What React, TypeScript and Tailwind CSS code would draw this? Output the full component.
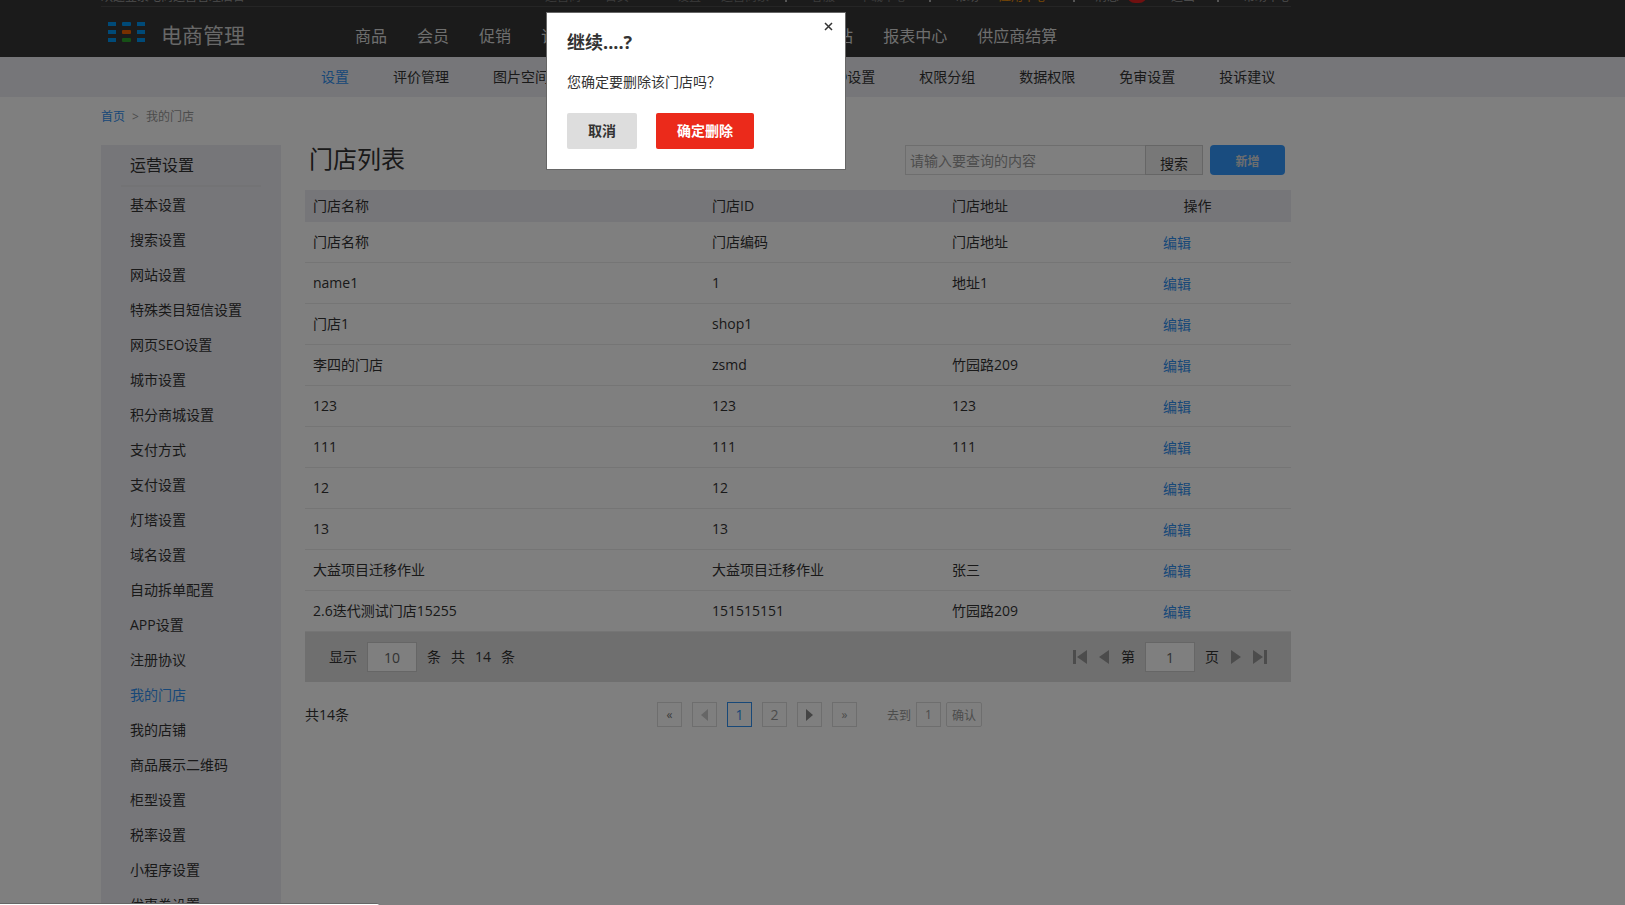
import React, { useState } from "react";

interface Shop {
  name: string;
  code: string;
  address: string;
}

const mainNav = ["商品", "会员", "促销", "订单", "财务", "库存", "数据统计", "网站", "报表中心", "供应商结算"];

const subNav = ["设置", "评价管理", "图片空间", "二维码管理", "会员组设置", "SEO设置", "权限分组", "数据权限", "免审设置", "投诉建议"];

const sideMenu = [
  "基本设置",
  "搜索设置",
  "网站设置",
  "特殊类目短信设置",
  "网页SEO设置",
  "城市设置",
  "积分商城设置",
  "支付方式",
  "支付设置",
  "灯塔设置",
  "域名设置",
  "自动拆单配置",
  "APP设置",
  "注册协议",
  "我的门店",
  "我的店铺",
  "商品展示二维码",
  "柜型设置",
  "税率设置",
  "小程序设置",
  "优惠券设置",
];

const shops: Shop[] = [
  { name: "门店名称", code: "门店编码", address: "门店地址" },
  { name: "name1", code: "1", address: "地址1" },
  { name: "门店1", code: "shop1", address: "" },
  { name: "李四的门店", code: "zsmd", address: "竹园路209" },
  { name: "123", code: "123", address: "123" },
  { name: "111", code: "111", address: "111" },
  { name: "12", code: "12", address: "" },
  { name: "13", code: "13", address: "" },
  { name: "大益项目迁移作业", code: "大益项目迁移作业", address: "张三" },
  { name: "2.6迭代测试门店15255", code: "151515151", address: "竹园路209" },
];

function Logo() {
  return (
    <svg width="38" height="20" viewBox="0 0 38 20" aria-hidden="true">
      <g fill="#0094f0">
        <rect x="0" y="0" width="8" height="4" />
        <rect x="14" y="0" width="9" height="4" rx="1" />
        <rect x="29" y="0" width="8" height="4" />
        <rect x="0" y="8" width="8" height="4" />
        <rect x="29" y="8" width="8" height="4" />
        <rect x="0" y="16" width="8" height="4" />
        <rect x="29" y="16" width="8" height="4" />
      </g>
      <rect x="14" y="8" width="9" height="4" rx="1" fill="#f06000" />
      <rect x="14" y="16" width="9" height="4" rx="1" fill="#2ca02c" />
    </svg>
  );
}

function Arrow({ left, bar }: { left?: boolean; bar?: boolean }) {
  return (
    <svg
      width={bar ? 14 : 10}
      height="14"
      viewBox={bar ? "0 0 14 14" : "0 0 10 14"}
      fill="currentColor"
      className={left ? "rotate-180" : ""}
      aria-hidden="true"
    >
      <path d="M0 0L10 7L0 14Z" />
      {bar && <rect x="11" y="0" width="3" height="14" />}
    </svg>
  );
}

function SmallArrow({ left }: { left?: boolean }) {
  return (
    <svg width="7" height="12" viewBox="0 0 7 12" fill="currentColor" className={left ? "rotate-180" : ""} aria-hidden="true">
      <path d="M0 0L7 6L0 12Z" />
    </svg>
  );
}

function Header() {
  return (
    <header className="bg-[#363636]">
      <div className="ml-[101px] max-w-[1190px]">
        <div className="flex h-[7px] items-end justify-between overflow-hidden border-b border-[#4a4a4a] pb-px text-xs leading-4 text-[#999]">
          <span>欢迎登录电商运营管理后台</span>
          <div className="flex shrink-0 items-end">
            <div className="flex gap-6 pr-12 text-[#777]">
              <span>运营商</span>
              <span>首页</span>
            </div>
            <div className="flex w-[108px] gap-5 text-[#777]">
              <span>设置</span>
              <span>运营商家</span>
            </div>
            <span className="mb-[3px] h-4 w-0.5 bg-[#aaa]" />
            <div className="flex w-[142px] gap-6 pl-6 text-[#777]">
              <span>客服</span>
              <span>下载中心</span>
            </div>
            <span className="mb-[3px] h-4 w-0.5 bg-[#aaa]" />
            <div className="flex w-[142px] gap-5 pl-6">
              <span>帮助</span>
              <span className="text-[#f0900a]">应用中心</span>
            </div>
            <span className="mb-[3px] h-4 w-0.5 bg-[#aaa]" />
            <div className="flex w-[142px] items-end pl-5">
              <span>消息</span>
              <span className="mb-0.5 ml-2 h-4 w-5 rounded-full bg-[#e02020]" />
              <span className="ml-6">退出</span>
            </div>
            <span className="mb-[3px] h-4 w-0.5 bg-[#aaa]" />
            <span className="pl-6">帮助中心</span>
          </div>
        </div>
        <div className="flex h-[50px] items-center">
          <a href="#" className="flex w-[254px] items-center gap-[15px] pl-[7px]">
            <Logo />
            <span className="pt-[6px] text-[21px] leading-7 text-[#d0d0d0]">电商管理</span>
          </a>
          <nav className="flex gap-[30px] pt-2 text-base whitespace-nowrap text-[#ddd]">
            {mainNav.map((item) => (
              <a key={item} href="#">
                {item}
              </a>
            ))}
          </nav>
        </div>
      </div>
    </header>
  );
}

function Sidebar() {
  return (
    <aside className="w-[180px] shrink-0 bg-[#ededf2]">
      <h2 className="mx-5 border-b-2 border-[#e6e6ea] pl-[9px] text-base leading-10">运营设置</h2>
      <ul className="pt-px">
        {sideMenu.map((item) => (
          <li key={item} className="h-[35px] pl-[29px] leading-[34px]">
            <a href="#" className={item === "我的门店" ? "text-[#3090f0]" : ""}>
              {item}
            </a>
          </li>
        ))}
      </ul>
    </aside>
  );
}

function ShopTable() {
  return (
    <table className="w-full table-fixed border-separate border-spacing-0 text-left">
      <colgroup>
        <col className="w-[399px]" />
        <col className="w-[240px]" />
        <col className="w-[160px]" />
        <col className="w-[187px]" />
      </colgroup>
      <thead className="bg-[#ededf2]">
        <tr className="h-8">
          <th className="px-2 font-normal">门店名称</th>
          <th className="px-2 font-normal">门店ID</th>
          <th className="px-2 font-normal">门店地址</th>
          <th className="text-center font-normal">操作</th>
        </tr>
      </thead>
      <tbody>
        {shops.map((shop, index) => (
          <tr key={index} className="h-[41px]">
            <td className="border-b border-[#eaeaea] px-2">{shop.name}</td>
            <td className="border-b border-[#eaeaea] px-2">{shop.code}</td>
            <td className="border-b border-[#eaeaea] px-2">{shop.address}</td>
            <td className="border-b border-[#eaeaea] pt-0.5 pl-[59px]">
              <a href="#" className="text-[#3090f0]">
                编辑
              </a>
            </td>
          </tr>
        ))}
      </tbody>
    </table>
  );
}

function TableFooter() {
  return (
    <div className="flex h-[50px] items-center justify-between bg-[#dfdfdf] px-6">
      <div className="flex items-center gap-[10px]">
        <label htmlFor="page-size">显示</label>
        <input id="page-size" defaultValue="10" className="h-[30px] w-[50px] border border-[#ccc] bg-white text-center text-[#666]" />
        <span>条</span>
        <span>共</span>
        <span>14</span>
        <span>条</span>
      </div>
      <div className="flex items-center gap-3 text-[#999]">
        <button type="button" aria-label="首页">
          <Arrow left bar />
        </button>
        <button type="button" aria-label="上一页">
          <Arrow left />
        </button>
        <div className="flex items-center gap-[10px] text-[#333]">
          <label htmlFor="page-no">第</label>
          <input id="page-no" defaultValue="1" className="h-[30px] w-[50px] border border-[#ccc] bg-white text-center text-[#666]" />
          <span>页</span>
        </div>
        <button type="button" aria-label="下一页">
          <Arrow />
        </button>
        <button type="button" aria-label="末页">
          <Arrow bar />
        </button>
      </div>
    </div>
  );
}

function Pagination() {
  const box = "flex h-[25px] w-[25px] items-center justify-center border border-[#ddd]";
  return (
    <div className="flex items-center pt-5">
      <span className="w-[352px]">共14条</span>
      <div className="flex gap-[10px] text-[#999]">
        <button type="button" aria-label="首页" className={box + " text-xs text-[#777]"}>
          «
        </button>
        <button type="button" aria-label="上一页" className={box + " text-[#ccc]"}>
          <SmallArrow left />
        </button>
        <button type="button" className="flex h-[25px] w-[25px] items-center justify-center border border-[#3090f0] text-[#3090f0]">
          1
        </button>
        <button type="button" className={box}>
          2
        </button>
        <button type="button" aria-label="下一页" className={box + " text-[#888]"}>
          <SmallArrow />
        </button>
        <button type="button" aria-label="末页" className={box + " text-xs"}>
          »
        </button>
      </div>
      <div className="flex items-center gap-[5px] pl-[30px] text-xs text-[#999]">
        <label htmlFor="goto" className="pt-0.5">
          去到
        </label>
        <input id="goto" defaultValue="1" className="h-[25px] w-[25px] border border-[#ddd] text-center" />
        <button type="button" className="h-[25px] w-9 rounded-xs border border-[#ddd] pt-0.5">
          确认
        </button>
      </div>
    </div>
  );
}

function ConfirmDialog({ onClose }: { onClose: () => void }) {
  return (
    <div className="fixed inset-0 z-10 flex items-start bg-black/50 pt-3 pl-[546px]">
      <div role="dialog" aria-labelledby="dialog-title" className="relative w-[300px] border border-[#666] bg-white px-5 pt-[13px] pb-5">
        <button type="button" aria-label="关闭" onClick={onClose} className="absolute top-[9px] right-[12px]">
          <svg width="9" height="9" viewBox="0 0 9 9" stroke="#333" strokeWidth="1.5" aria-hidden="true">
            <path d="M1 1L8 8M8 1L1 8" />
          </svg>
        </button>
        <h3 id="dialog-title" className="text-lg leading-8 font-bold">
          继续....?
        </h3>
        <p className="pt-3 pb-[19px] leading-6">您确定要删除该门店吗？</p>
        <div className="flex gap-[19px] font-bold">
          <button type="button" onClick={onClose} className="h-9 rounded-xs bg-[#ddd] px-[21px]">
            取消
          </button>
          <button type="button" onClick={onClose} className="h-9 rounded-xs bg-[#eb2a1b] px-[21px] text-white">
            确定删除
          </button>
        </div>
      </div>
    </div>
  );
}

export default function App() {
  const [showConfirm, setShowConfirm] = useState(true);

  return (
    <div className="h-screen overflow-hidden bg-white font-['Open_Sans','Noto_Sans_CJK_SC',sans-serif] text-sm text-[#333]">
      <Header />
      <nav className="h-10 bg-[#ededf2]">
        <div className="ml-[321px] flex gap-11 leading-10 whitespace-nowrap">
          {subNav.map((item, index) => (
            <a key={item} href="#" className={index === 0 ? "text-[#3090f0]" : ""}>
              {item}
            </a>
          ))}
        </div>
      </nav>
      <div className="ml-[101px] max-w-[1190px]">
        <div className="flex h-12 gap-[7px] text-xs leading-10 text-[#999]">
          <a href="#" className="text-[#3090f0]">
            首页
          </a>
          <span>&gt;</span>
          <span>我的门店</span>
        </div>
        <div className="flex gap-6">
          <Sidebar />
          <main className="min-w-0 flex-1">
            <div className="flex h-[45px] items-start justify-between pr-[6px] pl-1">
              <h1 className="text-2xl leading-7">门店列表</h1>
              <form className="flex" onSubmit={(e) => e.preventDefault()}>
                <input
                  aria-label="查询内容"
                  placeholder="请输入要查询的内容"
                  className="h-[30px] w-[241px] border border-[#ddd] px-1 placeholder:text-[#999]"
                />
                <button type="submit" className="-ml-px h-[30px] w-[58px] border border-[#ccc] bg-[#f0f0f0] pt-2 leading-5">
                  搜索
                </button>
                <button type="button" className="ml-[7px] h-[30px] w-[75px] rounded-sm bg-[#3399ff] pt-1 text-xs font-bold text-[#ddd]">
                  新增
                </button>
              </form>
            </div>
            <ShopTable />
            <TableFooter />
            <Pagination />
          </main>
        </div>
      </div>
      {showConfirm && <ConfirmDialog onClose={() => setShowConfirm(false)} />}
      {/* link preview strip along the bottom edge */}
      <div className="fixed bottom-0 left-0 z-20 h-0.5 w-[379px] rounded-tr-sm border-t border-[#666] bg-white" />
    </div>
  );
}
